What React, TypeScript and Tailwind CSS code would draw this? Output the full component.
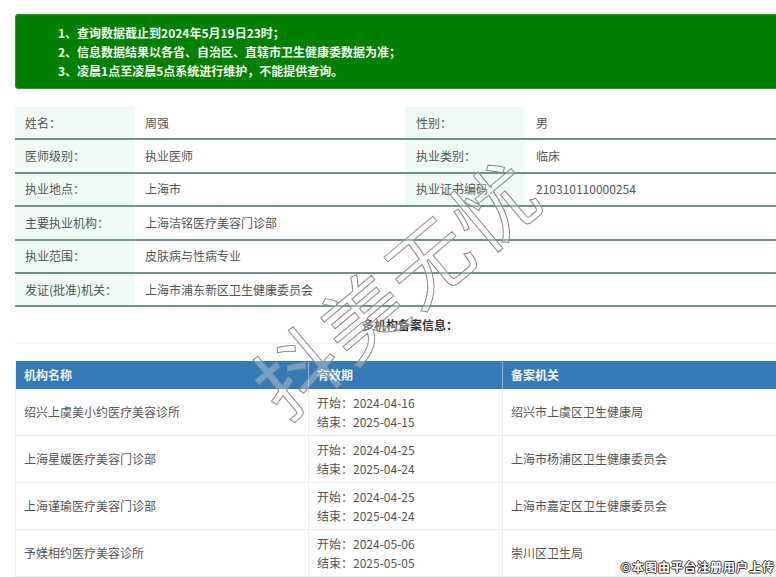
import React from "react";

const info = [
  { l1: "姓名：", v1: "周强", l2: "性别：", v2: "男" },
  { l1: "医师级别：", v1: "执业医师", l2: "执业类别：", v2: "临床" },
  { l1: "执业地点：", v1: "上海市", l2: "执业证书编码：", v2: "210310110000254" },
  { l1: "主要执业机构：", v1: "上海洁铭医疗美容门诊部" },
  { l1: "执业范围：", v1: "皮肤病与性病专业" },
  { l1: "发证(批准)机关：", v1: "上海市浦东新区卫生健康委员会" },
];

const orgs = [
  { name: "绍兴上虞美小约医疗美容诊所", start: "2024-04-16", end: "2025-04-15", dept: "绍兴市上虞区卫生健康局" },
  { name: "上海星媛医疗美容门诊部", start: "2024-04-25", end: "2025-04-24", dept: "上海市杨浦区卫生健康委员会" },
  { name: "上海谨瑜医疗美容门诊部", start: "2024-04-25", end: "2025-04-24", dept: "上海市嘉定区卫生健康委员会" },
  { name: "予媄相约医疗美容诊所", start: "2024-05-06", end: "2025-05-05", dept: "崇川区卫生局" },
];

export default function App() {
  return (
    <div
      className="relative h-[577px] w-[776px] overflow-hidden bg-white text-[12px] text-[#555]"
      style={{ fontFamily: '"Noto Sans CJK SC", "Noto Sans", sans-serif' }}
    >
      <div className="ml-[15px] w-[790px] pt-[14px]">
        {/* notice */}
        <div className="flex h-[75px] flex-col justify-center rounded-[3px] border border-[#2e9a2e] bg-[#008000] pl-[42px] text-[12px] font-bold leading-[19px] text-[#f4fff4]">
          <p>1、查询数据截止到2024年5月19日23时；</p>
          <p>2、信息数据结果以各省、自治区、直辖市卫生健康委数据为准；</p>
          <p>3、凌晨1点至凌晨5点系统进行维护，不能提供查询。</p>
        </div>

        {/* doctor info */}
        <div className="mt-[18px]">
          {info.map((r) => (
            <div key={r.l1} className="flex h-[33.4px] border-b-2 border-[#6f9486]">
              <div className="flex w-[120px] items-center bg-[#effaf4] pl-[10px]">{r.l1}</div>
              <div className="flex w-[270px] items-center pl-[10px]">{r.v1}</div>
              <div className={`flex w-[120px] items-center pl-[11px] ${r.l2 ? "bg-[#effaf4]" : ""}`}>{r.l2}</div>
              <div className="flex flex-1 items-center pl-[11px]">{r.v2}</div>
            </div>
          ))}
        </div>

        <div className="flex h-[37px] items-center justify-center border-b border-[#f0f0f0] font-bold text-[#333]">
          多机构备案信息：
        </div>

        {/* org table */}
        <div className="mt-[17px] border-l border-[#eee]">
          <div className="flex h-[28px] bg-[#337ab7] font-bold text-[#f2f6fb]">
            <div className="flex w-[293px] items-center border-r border-[#8fb4d8] pl-[8px]">机构名称</div>
            <div className="flex w-[194px] items-center border-r border-[#8fb4d8] pl-[8px]">有效期</div>
            <div className="flex flex-1 items-center pl-[8px]">备案机关</div>
          </div>
          {orgs.map((o) => (
            <div key={o.name} className="flex h-[47px] border-b border-[#eee]">
              <div className="flex w-[293px] items-center border-r border-[#eee] pl-[8px]">{o.name}</div>
              <div className="flex w-[194px] flex-col justify-center border-r border-[#eee] pl-[8px] leading-[19px]">
                <span>开始：{o.start}</span>
                <span>结束：{o.end}</span>
              </div>
              <div className="flex flex-1 items-center pl-[8px]">{o.dept}</div>
            </div>
          ))}
        </div>
      </div>

      {/* watermark */}
      <div className="pointer-events-none absolute left-[215px] top-[244px] w-[360px] -rotate-[40deg] text-center text-[82px] leading-none tracking-[4px] text-white/30 [-webkit-text-stroke:1px_#8a8a8a]">
        抖美无忧
      </div>

      <div className="absolute bottom-[1px] right-[1px] text-[12px] font-bold tracking-[1px] text-white [text-shadow:1px_0_0_#333,-1px_0_0_#333,0_1px_0_#333,0_-1px_0_#333]">
        ©本图由平台注册用户上传
      </div>
    </div>
  );
}
